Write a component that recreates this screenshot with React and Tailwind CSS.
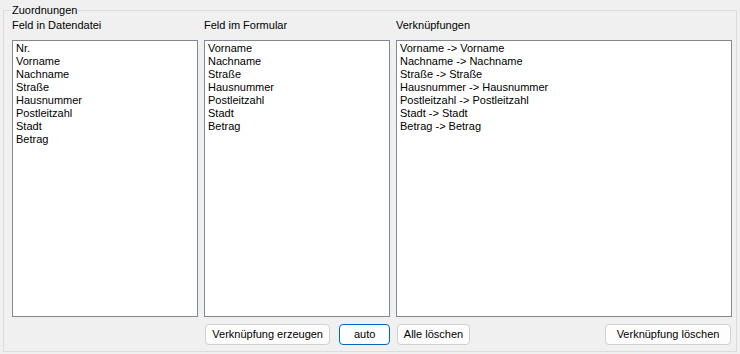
import React from 'react';

const quelle = ['Nr.', 'Vorname', 'Nachname', 'Straße', 'Hausnummer', 'Postleitzahl', 'Stadt', 'Betrag'];
const formular = ['Vorname', 'Nachname', 'Straße', 'Hausnummer', 'Postleitzahl', 'Stadt', 'Betrag'];
const links = formular.map((f) => `${f} -> ${f}`);

function ListBox({ items }) {
  return (
    <div className="h-[277px] bg-white border border-[#828790] pl-[3px] pt-[1px] overflow-hidden">
      {items.map((it) => (
        <div key={it} className="leading-[13px] h-[13px] whitespace-nowrap">{it}</div>
      ))}
    </div>
  );
}

function Button({ children, primary, className = '' }) {
  return (
    <button
      className={
        'h-[21px] rounded-[4px] bg-[#fdfdfd] border leading-[13px] ' +
        (primary ? 'border-[#0067c0] ' : 'border-[#d0d0d0] ') +
        className
      }
    >
      {children}
    </button>
  );
}

export default function App() {
  return (
    <div
      className="w-[740px] h-[354px] bg-[#f0f0f0] text-black text-[11px] leading-[13px] overflow-hidden"
      style={{ fontFamily: '"Liberation Sans", Arial, sans-serif' }}
    >
      <fieldset className="ml-[3px] mt-[4px] w-[734px] h-[348px] border border-[#dcdcdc] pl-[8px] pr-0 pb-0">
        <legend className="px-[1px] -ml-[1px] leading-[13px]">Zuordnungen</legend>

        <div className="grid grid-cols-[186px_186px_336px] gap-x-[6px] mt-[2px]">
          <div>Feld in Datendatei</div>
          <div>Feld im Formular</div>
          <div>Verknüpfungen</div>

          <div className="mt-[8px]"><ListBox items={quelle} /></div>
          <div className="mt-[8px]"><ListBox items={formular} /></div>
          <div className="mt-[8px]"><ListBox items={links} /></div>

          <div />
          <div className="mt-[7px] flex gap-[9px] pl-[1px]">
            <Button className="w-[126px]">Verknüpfung erzeugen</Button>
            <Button primary className="w-[51px]">auto</Button>
          </div>
          <div className="mt-[7px] flex justify-between pl-[1px] pr-[1px]">
            <Button className="w-[73px]">Alle löschen</Button>
            <Button className="w-[126px]">Verknüpfung löschen</Button>
          </div>
        </div>
      </fieldset>
    </div>
  );
}
